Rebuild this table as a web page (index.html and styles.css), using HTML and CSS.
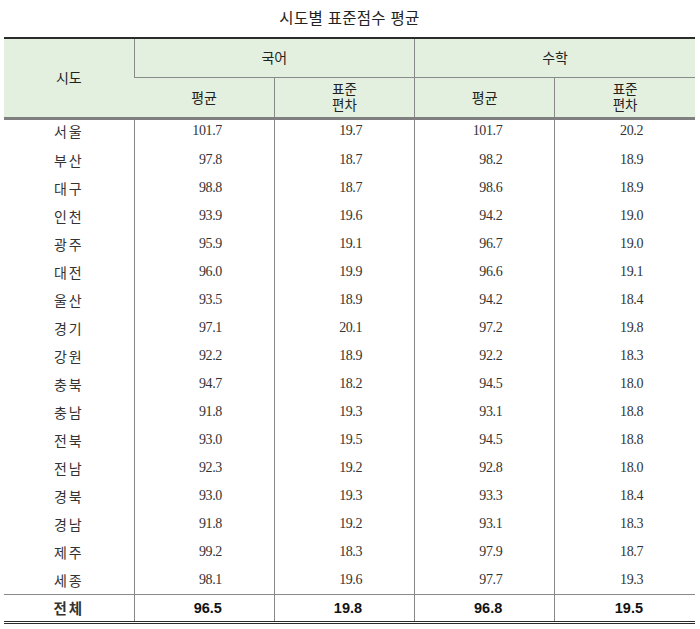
FILE: index.html
```html
<!DOCTYPE html>
<html lang="ko">
<head>
<meta charset="utf-8">
<link rel="stylesheet" href="styles.css">
</head>
<body>
<div class="page">
  <h1 class="title">시도별 표준점수 평균</h1>
  <table class="stats">
    <colgroup>
      <col class="c-region"><col class="c-num"><col class="c-num"><col class="c-num"><col class="c-num">
    </colgroup>
    <thead>
      <tr class="h1">
        <th rowspan="2" class="region-h">시도</th>
        <th colspan="2">국어</th>
        <th colspan="2">수학</th>
      </tr>
      <tr class="h2">
        <th>평균</th>
        <th class="two"><span class="ln">표준</span><span class="ln">편차</span></th>
        <th>평균</th>
        <th class="two"><span class="ln">표준</span><span class="ln">편차</span></th>
      </tr>
    </thead>
    <tbody>
      <tr><td class="r">서울</td><td>101.7</td><td>19.7</td><td>101.7</td><td>20.2</td></tr>
      <tr><td class="r">부산</td><td>97.8</td><td>18.7</td><td>98.2</td><td>18.9</td></tr>
      <tr><td class="r">대구</td><td>98.8</td><td>18.7</td><td>98.6</td><td>18.9</td></tr>
      <tr><td class="r">인천</td><td>93.9</td><td>19.6</td><td>94.2</td><td>19.0</td></tr>
      <tr><td class="r">광주</td><td>95.9</td><td>19.1</td><td>96.7</td><td>19.0</td></tr>
      <tr><td class="r">대전</td><td>96.0</td><td>19.9</td><td>96.6</td><td>19.1</td></tr>
      <tr><td class="r">울산</td><td>93.5</td><td>18.9</td><td>94.2</td><td>18.4</td></tr>
      <tr><td class="r">경기</td><td>97.1</td><td>20.1</td><td>97.2</td><td>19.8</td></tr>
      <tr><td class="r">강원</td><td>92.2</td><td>18.9</td><td>92.2</td><td>18.3</td></tr>
      <tr><td class="r">충북</td><td>94.7</td><td>18.2</td><td>94.5</td><td>18.0</td></tr>
      <tr><td class="r">충남</td><td>91.8</td><td>19.3</td><td>93.1</td><td>18.8</td></tr>
      <tr><td class="r">전북</td><td>93.0</td><td>19.5</td><td>94.5</td><td>18.8</td></tr>
      <tr><td class="r">전남</td><td>92.3</td><td>19.2</td><td>92.8</td><td>18.0</td></tr>
      <tr><td class="r">경북</td><td>93.0</td><td>19.3</td><td>93.3</td><td>18.4</td></tr>
      <tr><td class="r">경남</td><td>91.8</td><td>19.2</td><td>93.1</td><td>18.3</td></tr>
      <tr><td class="r">제주</td><td>99.2</td><td>18.3</td><td>97.9</td><td>18.7</td></tr>
      <tr><td class="r">세종</td><td>98.1</td><td>19.6</td><td>97.7</td><td>19.3</td></tr>
    </tbody>
    <tfoot>
      <tr><td class="r">전체</td><td>96.5</td><td>19.8</td><td>96.8</td><td>19.5</td></tr>
    </tfoot>
  </table>
</div>
</body>
</html>
```

FILE: styles.css
```css
html, body {
  margin: 0;
  padding: 0;
  background: #ffffff;
}

.page {
  width: 700px;
  padding: 0 5px 0 4px;
  box-sizing: border-box;
  color: #222222;
  font-family: "Noto Sans CJK KR", "Noto Sans", sans-serif;
}

.title {
  margin: 0;
  height: 37px;
  line-height: 34px;
  text-align: center;
  font-size: 15.5px;
  letter-spacing: 0.3px;
  font-weight: 400;
  color: #222222;
}

.stats {
  width: 691px;
  border-collapse: collapse;
  table-layout: fixed;
  border-top: 2px solid #2b2b2b;
  border-bottom: 3px double #2b2b2b;
}

.c-region { width: 130px; }
.c-num { width: 140px; }

.stats th {
  background: #e3f0e0;
  font-weight: 400;
  font-size: 14px;
  line-height: 18px;
  color: #222222;
  border-left: 1px solid #888888;
  padding: 0;
  text-align: center;
  vertical-align: middle;
}

.stats th:first-child,
.stats td:first-child {
  border-left: none;
}

.h1 {
  height: 39px;
}

.h1 th {
  border-bottom: 1px solid #8a8a8a;
  padding-bottom: 2px;
}

.h2 {
  height: 41px;
}

.h2 th {
  border-bottom: 3px solid #7f7f7f;
}

.h2 th.two {
  padding-bottom: 3px;
  font-size: 13.5px;
}

.ln {
  display: block;
  height: 16px;
  line-height: 16px;
}

.stats thead tr.h1 th.region-h {
  border-bottom: 3px solid #7f7f7f;
}

.stats tbody tr {
  height: 28px;
}

.stats td {
  padding: 0 52px 0 0;
  line-height: 16px;
  border-left: 1px solid #888888;
  text-align: right;
  vertical-align: middle;
  font-family: "Liberation Serif", "DejaVu Serif", serif;
  font-size: 14px;
  letter-spacing: -0.4px;
  color: #333333;
}

.stats tbody tr:first-child td {
  padding-bottom: 3px;
}

.stats td.r {
  padding-right: 0;
  text-align: center;
  font-family: "Noto Sans CJK KR", "Noto Sans", sans-serif;
  letter-spacing: 2px;
  color: #333333;
}

.stats tfoot tr {
  height: 28px;
}

.stats tfoot td {
  border-top: 1px solid #8a8a8a;
  font-family: "Liberation Sans", "Noto Sans", sans-serif;
  font-weight: 700;
  font-size: 14.5px;
  letter-spacing: 0;
  color: #111111;
}

.stats tfoot td.r {
  font-family: "Noto Sans CJK KR", "Noto Sans", sans-serif;
  font-weight: 700;
  letter-spacing: 2px;
}
```
